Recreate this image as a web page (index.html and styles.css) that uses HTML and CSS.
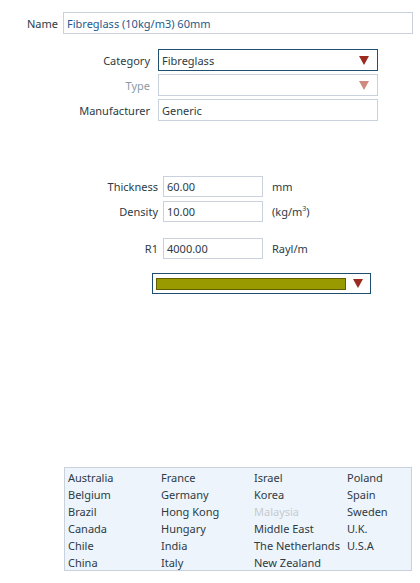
FILE: index.html
```html
<!DOCTYPE html>
<html lang="en">
<head>
  <meta charset="UTF-8">
  <title>Material</title>
  <link rel="stylesheet" href="styles.css">
</head>
<body>
  <div class="name-row">
    <span class="lbl">Name</span>
    <div class="box name-box">Fibreglass (10kg/m3) 60mm</div>
  </div>

  <div class="meta">
    <span class="lbl">Category</span>
    <div class="box select active">Fibreglass<span class="arrow"></span></div>
    <span class="lbl off">Type</span>
    <div class="box select"><span class="arrow faded"></span></div>
    <span class="lbl">Manufacturer</span>
    <div class="box">Generic</div>
  </div>

  <div class="dims">
    <span class="lbl">Thickness</span>
    <div class="box">60.00</div>
    <span class="unit">mm</span>
    <span class="lbl">Density</span>
    <div class="box">10.00</div>
    <span class="unit">(kg/m<sup>3</sup>)</span>
    <span class="lbl r1">R1</span>
    <div class="box r1">4000.00</div>
    <span class="unit r1">Rayl/m</span>
  </div>

  <div class="colour-row">
    <div class="colour-select">
      <div class="swatch"></div>
      <span class="arrow"></span>
    </div>
  </div>

  <div class="countries">
    <span>Australia</span><span>France</span><span>Israel</span><span>Poland</span>
    <span>Belgium</span><span>Germany</span><span>Korea</span><span>Spain</span>
    <span>Brazil</span><span>Hong Kong</span><span class="off">Malaysia</span><span>Sweden</span>
    <span>Canada</span><span>Hungary</span><span>Middle East</span><span>U.K.</span>
    <span>Chile</span><span>India</span><span>The Netherlands</span><span>U.S.A</span>
    <span>China</span><span>Italy</span><span>New Zealand</span><span></span>
  </div>
</body>
</html>
```

FILE: styles.css
```css
body {
  margin: 0;
  background: #fff;
  font-family: "Noto Sans", sans-serif;
  font-size: 11px;
  color: #2c3b45;
}

.lbl {
  text-align: right;
  white-space: nowrap;
}
.lbl.off { color: #8b9ba6; }

.box {
  box-sizing: border-box;
  height: 22px;
  border: 1px solid #c9d1dc;
  padding: 0 3px;
  display: flex;
  align-items: center;
  background: #fff;
  white-space: nowrap;
}

.arrow {
  margin-left: auto;
  width: 0;
  height: 0;
  border-left: 5px solid transparent;
  border-right: 5px solid transparent;
  border-top: 9px solid #9c2b1f;
  margin-right: 5px;
}
.arrow.faded { border-top-color: #cf8a80; }

.name-row {
  display: flex;
  align-items: center;
  margin: 12px 7px 0 0;
}
.name-row .lbl { width: 58px; }
.name-row .name-box {
  flex: 1;
  margin-left: 5px;
  color: #1e5a8c;
}

.meta {
  display: grid;
  grid-template-columns: 150px 220px;
  column-gap: 8px;
  row-gap: 3px;
  align-items: center;
  margin-top: 15px;
}
.meta .box.active { border-color: #1f4f70; }

.dims {
  display: grid;
  grid-template-columns: 158px 100px auto;
  column-gap: 5px;
  row-gap: 4px;
  align-items: center;
  margin-top: 55px;
}
.dims .box { height: 21px; }
.dims .unit { margin-left: 4px; }
.dims sup { font-size: 7px; }
.dims .r1 { margin-top: 12px; }

.colour-row {
  display: flex;
  padding-left: 152px;
  margin-top: 14px;
}
.colour-select {
  box-sizing: border-box;
  width: 219px;
  height: 21px;
  border: 1px solid #1f4f70;
  display: flex;
  align-items: center;
  padding: 0 4px 0 3px;
}
.swatch {
  width: 190px;
  height: 12px;
  box-sizing: border-box;
  border: 1px solid #5f5f00;
  background: #999900;
}
.colour-select .arrow { margin-right: 3px; }

.countries {
  box-sizing: border-box;
  margin: 173px 0 0 64px;
  width: 348px;
  border: 1px solid #c9d1dc;
  background: #eef4fb;
  display: grid;
  grid-template-columns: repeat(4, 93px);
  grid-auto-rows: 17px;
  padding: 1px 0 0 3px;
  height: 104px;
}
.countries span {
  line-height: 17px;
  white-space: nowrap;
}
.countries .off { color: #c5cbd1; }
```
